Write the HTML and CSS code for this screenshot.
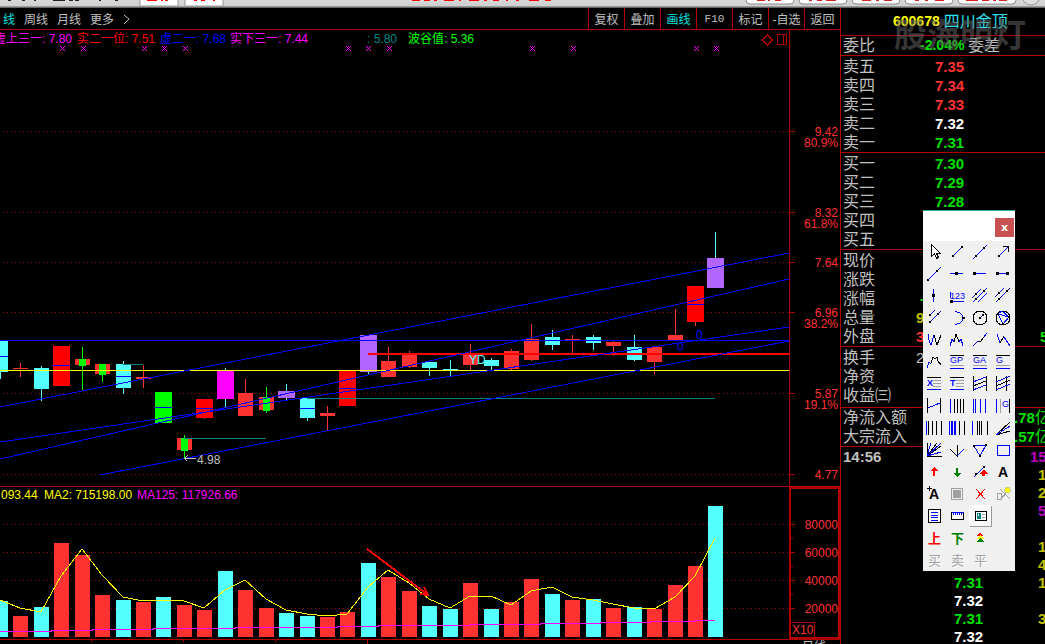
FILE: index.html
```html
<!DOCTYPE html>
<html lang="zh-CN">
<head>
<meta charset="utf-8">
<title>四川金顶 600678</title>
<link rel="stylesheet" href="styles.css">
</head>
<body>
<div class="app">
  <header class="ribbon">
    <svg class="ribbon-left" width="560" height="8" viewBox="0 0 560 8" aria-hidden="true">
      <path d="M8 0.5h3M22 0.5h3M34 0.5h2M53 0.5h12M69 0.5h4M75 0.5h4M99 0.5h2M115 0.5h3" stroke="#222"/>
      <path d="M140 -1h38v7h-38zM185 -1h38v7h-38z" fill="#fff" stroke="#999"/>
      <path d="M147 0.5h10M161 0.5h2M165 0.5h3M194 0.5h3M201 0.5h4M213 0.5h2M412 0.5h8M424 0.5h6M434 0.5h3M444 0.5h10M459 0.5h2M469 0.5h10M484 0.5h3M493 0.5h6M506 0.5h2M516 0.5h3M529 0.5h10M545 0.5h6" stroke="#f00"/>
    </svg>
    <svg class="ribbon-right" width="300" height="8" viewBox="0 0 300 8" aria-hidden="true">
      <g fill="#fff" stroke="#8a8a8a"><rect x="1" y="-10" width="48" height="14" rx="4"/><rect x="54" y="-10" width="48" height="14" rx="4"/><rect x="107" y="-10" width="48" height="14" rx="4"/><rect x="160" y="-10" width="48" height="14" rx="4"/><rect x="213" y="-10" width="58" height="14" rx="4"/></g>
      <circle cx="286" cy="-4" r="9" fill="#ddd" stroke="#999"/>
      <path d="M12 0.5h8M23 0.5h2M30 0.5h6M64 0.5h3M72 0.5h5M81 0.5h10M117 0.5h9M131 0.5h3M139 0.5h8M170 0.5h4M180 0.5h3M190 0.5h9M221 0.5h12M237 0.5h7M248 0.5h3M254 0.5h8" stroke="#d22"/>
    </svg>
  </header>
  <main class="work">
    <section class="left">
      <nav class="toolbar">
        <div class="periods">
          <button class="on">线</button><button>周线</button><button>月线</button><button>更多</button>
          <svg width="8" height="12" viewBox="0 0 8 12" aria-hidden="true"><path d="M1 2l5 4-5 5" fill="none" stroke="#c0c0c0"/></svg>
        </div>
        <div class="tools">
          <button>复权</button><button>叠加</button><button class="on">画线</button><button class="mono">F10</button><button>标记</button><button>-自选</button><button>返回</button>
        </div>
      </nav>
      <div class="pane price">
        <svg class="plot" id="price" viewBox="0 30 789 456" preserveAspectRatio="none"></svg>
        <div class="legend">
          <span class="pink">虚上三一: 7.80</span><span class="red">实二一位: 7.51</span><span class="blue">虚二一: 7.68</span><span class="pink">实下三一: 7.44</span><span class="teal">: 5.80</span><span class="lime">波谷值: 5.36</span>
        </div>
        <svg class="axis" id="priceAxis" viewBox="789 30 51 456"></svg>
      </div>
      <div class="pane volume">
        <svg class="plot" id="volume" viewBox="0 487 789 152" preserveAspectRatio="none"></svg>
        <div class="legend vol"><span class="yellow">093.44</span><span class="yellow">MA2: 715198.00</span><span class="pink">MA125: 117926.66</span></div>
        <svg class="axis" id="volumeAxis" viewBox="789 487 51 152"></svg>
      </div>
      <footer class="foot">
        <svg class="ticks" viewBox="0 0 802 4" preserveAspectRatio="none" aria-hidden="true"><path d="M91.5 0v2M183.500 0v2M275.500 0v2M367.500 0v4" stroke="#b00000"/></svg>
        <span>日线</span>
      </footer>
    </section>
    <aside class="quote">
      <div class="title"><b>600678</b><span>四川金顶</span></div>
      <div class="ratio"><span>委比</span><b>-2.04%</b><span>委差</span></div>
      <div class="watermark" aria-hidden="true">股海明灯</div>
      <div class="group book">
        <div class="row"><span>卖五</span><b class="up">7.35</b></div>
        <div class="row"><span>卖四</span><b class="up">7.34</b></div>
        <div class="row"><span>卖三</span><b class="up">7.33</b></div>
        <div class="row"><span>卖二</span><b class="flat">7.32</b></div>
        <div class="row"><span>卖一</span><b class="down">7.31</b></div>
      </div>
      <div class="group book">
        <div class="row"><span>买一</span><b class="down">7.30</b></div>
        <div class="row"><span>买二</span><b class="down">7.29</b></div>
        <div class="row"><span>买三</span><b class="down">7.28</b></div>
        <div class="row"><span>买四</span></div>
        <div class="row"><span>买五</span></div>
      </div>
      <div class="group">
        <div class="row"><span>现价</span></div>
        <div class="row"><span>涨跌</span></div>
        <div class="row"><span>涨幅</span><b class="down dash">-</b></div>
        <div class="row"><span>总量</span><b class="gold">9</b></div>
        <div class="row"><span>外盘</span><b class="up">3</b><b class="down edge">5</b></div>
      </div>
      <div class="group loose">
        <div class="row"><span>换手</span><b class="plain">2</b></div>
        <div class="row"><span>净资</span></div>
        <div class="row"><span>收益㈢</span></div>
      </div>
      <div class="group tight">
        <div class="row"><span>净流入额</span><i></i><span class="down"><b>.78</b>亿</span></div>
        <div class="row"><span>大宗流入</span><i></i><span class="down"><b>.57</b>亿</span></div>
      </div>
      <div class="trades">
        <div class="trade"><b>14:56</b><b></b><b class="violet">15</b></div>
        <div class="trade one"><b></b><b></b><b class="gold">1</b></div>
        <div class="trade one"><b></b><b></b><b class="gold">2</b></div>
        <div class="trade one"><b></b><b></b><b class="violet">5</b></div>
        <div class="trade one"></div>
        <div class="trade one"><b></b><b></b><b class="gold">1</b></div>
        <div class="trade one"><b></b><b></b><b class="gold">4</b></div>
        <div class="trade one"><b></b><b class="down">7.31</b><b class="gold">1</b></div>
        <div class="trade one"><b></b><b class="flat">7.32</b></div>
        <div class="trade one"><b></b><b class="down">7.31</b><b class="gold">3</b></div>
        <div class="trade one"><b></b><b class="flat">7.32</b></div>
      </div>
    </aside>
  </main>
  <div class="palette" role="dialog" aria-label="画线工具">
    <div class="palette-head"><button class="close" aria-label="关闭">x</button></div>
    <div class="palette-grid" id="palette"></div>
  </div>
</div>
<script src="chart.js"></script>
</body>
</html>
```
FILE: styles.css
```css
* { box-sizing: border-box; }
body {
  margin: 0;
  background: #000;
  color: #c0c0c0;
  font-family: "Liberation Sans", "Noto Sans CJK SC", sans-serif;
  font-size: 12px;
  overflow: hidden;
}
button {
  border: 0;
  padding: 0;
  margin: 0;
  background: none;
  color: inherit;
  font: inherit;
}
svg { display: block; }
.app { position: relative; min-height: 100vh; }
.ribbon {
  display: flex;
  justify-content: space-between;
  height: 8px;
  background: linear-gradient(#d8d8d8, #cfcfcf 6px, #666 7px);
  overflow: hidden;
}
.ribbon svg { flex: none; }
.work { display: grid; grid-template-columns: minmax(0, 1fr) 205px; }
.left { min-width: 0; }

.toolbar {
  display: flex;
  justify-content: space-between;
  height: 22px;
  border-bottom: 1px solid #b00000;
}
.periods { display: flex; align-items: center; gap: 9px; padding-left: 3px; }
.tools { display: flex; }
.tools button { width: 36px; border-left: 1px solid #b00000; white-space: nowrap; }
.toolbar .on { color: #00e0e0; }
.tools .mono { font-family: "Liberation Mono", monospace; font-size: 11px; }

.pane {
  position: relative;
  display: grid;
  grid-template-columns: minmax(0, 1fr) 51px;
  border-bottom: 1px solid #b00000;
}
.price svg { height: 456px; width: 100%; }
.volume svg { height: 152px; width: 100%; }
.plot, .axis, .ticks, .palette-grid svg { shape-rendering: crispEdges; }
.legend {
  position: absolute;
  top: 0;
  left: -6px;
  display: grid;
  grid-template-columns: 83px 83px 70px 137px 41px 80px;
  line-height: 18px;
  white-space: nowrap;
}
.legend.vol { left: 1px; grid-template-columns: 43px 93px 110px; line-height: 16px; }
.pink { color: #f0f; }
.red { color: #f00; }
.blue { color: #00f; }
.teal { color: #008888; }
.lime { color: #0f0; }
.yellow { color: #ff0; }
.foot { display: grid; grid-template-columns: minmax(0, 1fr) 38px; height: 4px; overflow: hidden; line-height: 14px; }
.foot svg { width: 100%; height: 4px; }

.quote {
  position: relative;
  border-left: 1px solid #b00000;
  font-size: 16px;
  line-height: 19px;
  overflow: hidden;
}
.quote b { font-size: 15px; white-space: nowrap; }
.title {
  display: flex;
  gap: 4px;
  height: 28px;
  padding: 4px 0 0 52px;
  border-bottom: 1px solid #b00000;
  color: #30e0f0;
}
.title b, .ratio b { font-size: 14px; }
.title b { color: #ff0; }
.ratio { display: flex; height: 20px; padding-left: 2px; border-bottom: 1px solid #b00000; }
.ratio b { margin-left: 45px; width: 48px; color: #00e000; }
.watermark {
  position: absolute;
  top: 8px;
  left: 53px;
  color: rgba(100, 100, 100, 0.55);
  font-size: 33px;
  font-weight: 700;
  line-height: 40px;
  white-space: nowrap;
}
.group { padding-top: 1px; border-bottom: 1px solid #b00000; }
.loose { padding-bottom: 2px; }
.tight { padding-top: 0; }
.row {
  display: grid;
  grid-template-columns: 73px 98px 60px;
  height: 19px;
  padding-left: 2px;
  white-space: nowrap;
}
.book .row b { padding-left: 19px; }
.row .edge { padding-left: 26px; }
.row .dash { padding-left: 4px; }
.row .plain { font-weight: 400; }
.up { color: #ff3232; }
.down { color: #00e000; }
.flat { color: #fff; }
.gold { color: #c0c000; }
.violet { color: #c000c0; }
.trades { padding-top: 1px; line-height: 18px; }
.trade { display: grid; grid-template-columns: 111px 76px 20px; height: 18px; padding-left: 2px; }
.one b:nth-child(3) { padding-left: 8px; }

.palette {
  position: absolute;
  top: 210px;
  right: 30px;
  width: 92px;
  background: #f0f0f0;
  border-top: 1px solid #20b0a0;
}
.palette-head { display: flex; justify-content: flex-end; height: 30px; padding: 7px 1px 0 0; background: #fff; }
.close {
  width: 19px;
  height: 19px;
  background: #c75050;
  color: #fff;
  font: bold 11px/16px "DejaVu Sans", sans-serif;
}
.palette-grid { display: grid; grid-template-columns: repeat(4, 23px); grid-auto-rows: 22px; }
.palette-grid svg { width: 23px; height: 22px; overflow: visible; }
.palette-grid .pressed { background: #f8f8f8; box-shadow: inset 1px 1px #fff, inset -1px -1px #999; }
.palette-grid button:focus-visible { outline: 1px dotted #000; }
svg text { font-family: "Liberation Sans", "Noto Sans CJK SC", sans-serif; font-size: 12px; }
.palette-grid .small { font-size: 9px; }
.palette-grid .bold { font-size: 14px; font-weight: 700; }
.palette-grid .word { font-size: 13px; }
.palette-grid .strong { font-weight: 700; }
```
FILE: chart.js
```js
const CYAN = '#54ffff', RED = '#ff3232', HOT = '#ff0000', GREEN = '#00ff00', PURPLE = '#b266ff', PINK = '#ff00ff';
const rect = (x, y, w, h, c) => `<rect x="${x}" y="${y}" width="${w}" height="${h}" fill="${c}"/>`;
const line = (x1, y1, x2, y2, c, w = 1, extra = '') =>
  `<line x1="${x1}" y1="${y1}" x2="${x2}" y2="${y2}" stroke="${c}" stroke-width="${w}" ${extra}/>`;
const grid = y => line(3, y + .5, 789, y + .5, '#a00000', 1, 'stroke-dasharray="1 3"');

/* x, width, top, bottom, wick x, wick top, wick bottom, colour, wick colour, mid mark */
const candles = [
  [0,8,341,372,0,341,379,CYAN,CYAN,356],[13,15,368,369,20,363,377,RED,RED],[34,15,368,389,41,366,401,CYAN,CYAN],
  [53,17,346,386,61,346,386,HOT,HOT,365],[75,15,359,365,82,347,391,RED,GREEN],[95,15,364,374,102,364,382,RED,GREEN],
  [116,15,364,388,123,361,394,CYAN,CYAN,376],[136,15,377,379,143,365,388,RED,RED],[155,17,392,423,163,392,423,GREEN,GREEN,407],
  [177,15,438,450,184,435,459,RED,GREEN],[196,17,399,418,204,399,419,HOT,RED,408],[217,17,371,399,225,368,407,PINK,CYAN],
  [238,15,393,416,245,379,416,RED,RED],[259,15,397,410,266,387,413,RED,GREEN],[278,17,391,398,286,384,400,PURPLE,CYAN],
  [300,15,398,418,307,398,421,CYAN,CYAN,408],[320,15,413,416,327,406,430,RED,RED],[339,17,371,406,347,371,406,HOT,HOT,388],
  [360,17,335,372,368,335,375,PURPLE,CYAN],[381,15,361,377,388,347,377,RED,RED],[402,15,355,367,409,351,368,RED,RED],
  [422,15,362,368,429,362,376,CYAN,CYAN],[443,15,369,370,450,360,376,CYAN,CYAN],[463,15,355,365,470,344,370,RED,RED],
  [484,15,360,366,491,358,370,CYAN,CYAN],[504,15,351,369,511,349,370,RED,RED],[524,15,339,360,531,324,361,RED,RED],
  [545,15,337,345,552,330,350,CYAN,CYAN],[565,15,339,340,572,335,353,RED,RED],[586,15,337,343,593,335,350,CYAN,CYAN],
  [606,15,342,346,613,341,356,RED,RED],[627,15,347,360,634,335,361,CYAN,CYAN],[647,15,347,362,654,347,374,RED,RED],
  [668,15,335,340,675,309,340,RED,RED],[687,17,286,322,695,286,326,HOT,RED,304],[707,17,258,288,715,232,288,PURPLE,CYAN]
];
let p = [131, 212, 262, 312, 393, 474].map(grid).join('');
for (const [x, w, t, b, wx, wt, wb, c, wc, mid] of candles) {
  p += rect(wx, wt, 1, wb - wt, wc) + rect(x, t, w, b - t, c);
  if (c === RED && wc === GREEN) p += rect(x + 4, t, 7, b - t + 1, GREEN);
  if (mid) p += rect(x, mid, w, 1, '#0000ff');
}
p += rect(123, 364, 20, 1, '#008080') + rect(184, 438, 82, 1, '#008080') + rect(307, 398, 408, 1, '#008080');
p += rect(0, 340, 789, 1, '#0000ff') + rect(368, 353, 421, 2, '#ff0000') + rect(0, 370, 789, 1, '#ffff00');
for (const [a, b, c] of [[0, 407, 253], [0, 442, 327], [0, 459, 279], [100, 475, 341]])
  p += line(a, b, 789, c, '#0000ff');
p += '<path d="M196 458.500h-12M187.500 455.500l-3 3 3 3" fill="none" stroke="#c0c0c0"/><text x="197" y="464" fill="#c0c0c0">4.98</text>';
p += '<text x="469" y="364" fill="#54ffff">YD</text><text x="677" y="351" fill="#0000ff">0</text><text x="696" y="339" fill="#0000ff">0</text>';
for (const x of [62, 83, 144, 164, 185, 348, 368, 389, 532, 573, 696, 716])
  p += `<path d="M${x - 2} 46l5 5M${x + 3} 46l-5 5" stroke="#ff00ff"/>`;
p += '<path d="M767.500 35l5 5-5 5-5-5zM777.500 34.500h9v10h-9zM783.500 34v11" fill="none" stroke="#b00000"/>';
document.getElementById('price').innerHTML = p;

const label = (y, t) => `<text x="838" y="${y + 5}" text-anchor="end" fill="#ff3232">${t}</text>`;
let a = rect(789, 30, 1, 456, '#b00000');
for (const [y, t, s] of [[131,'9.42','80.9%'],[212,'8.32','61.8%'],[262,'7.64'],[312,'6.96','38.2%'],[393,'5.87','19.1%'],[474,'4.77']])
  a += rect(790, y, 5, 1, '#b00000') + label(y, t) + (s ? label(y + 11, s) : '');
document.getElementById('priceAxis').innerHTML = a;

const tops = [601,616,607,543,555,595,600,602,597,605,610,571,590,608,613,616,617,612,563,577,591,606,609,583,609,602,579,594,600,599,608,607,609,585,566,506];
const cyanBars = new Set([0,2,6,8,11,14,15,18,21,22,24,27,29,31,35]);
const average = [600,608,612,576,549,575,597,601,600,601,608,590,580,599,610,614,616,614,587,570,583,599,608,596,596,605,591,587,597,600,604,608,609,597,576,538];
let v = [524, 552, 580, 608].map(grid).join('');
tops.forEach((t, i) => {
  const x = i ? candles[i][4] - 7 : 0;
  v += rect(x, t, i ? 15 : 8, 637 - t, cyanBars.has(i) ? CYAN : RED);
});
v += `<polyline points="${average.map((y, i) => candles[i][4] + ',' + y).join(' ')}" fill="none" stroke="#ffff00"/>`;
v += '<path d="M0 631.500H51V630.500H92V629.500H153V628.500H235V627.500H337V626.500H378V625.500H470V624.500H540V623.500H600V622.500H650V621.500H695V620.500H715" fill="none" stroke="#ff00ff"/>';
v += '<path d="M367 549L428 595M424 587l4 8-8-1" fill="none" stroke="#ff0000" stroke-width="2"/>';
document.getElementById('volume').innerHTML = v;

let va = '<path d="M790 487V638H839V487.500H790" fill="none" stroke="#b00000" stroke-width="2"/>';
for (const y of [524, 552, 580, 608]) va += rect(790, y, 5, 1, '#b00000') + rect(790, y + 14, 3, 1, '#b00000');
va += [['80000', 524], ['60000', 552], ['40000', 580], ['20000', 608]].map(([t, y]) => label(y, t)).join('');
va += '<rect x="790.500" y="622.500" width="24" height="15" fill="#000" stroke="#b00000"/><text x="792" y="634" fill="#ff3232">X10</text>';
document.getElementById('volumeAxis').innerHTML = va;

const K = '#000', B = '#0000ff', G = '#a0a0a0';
const s = (d, c = B, w = 1) => `<path d="${d}" fill="none" stroke="${c}" stroke-width="${w}"/>`;
const dots = (...q) => q.map(([x, y]) => rect(x - 1, y - 1, 2, 2, K)).join('');
const gann = t => s('M4 4.500h14', K) + `<text class="small" x="4" y="12" fill="#00f">${t}</text>` + s('M4 14.500h14', G) + s('M4 17.500h14', B, 1);
const bands = t => s('M4 4.500h14', K) + `<text class="small strong" x="4" y="13" fill="#00f">${t}</text>` + s('M10 7.500h8M10 10.500h8M10 13.500h8', G) + s('M4 16.500h14');
const v1 = (xs, c) => s(xs.map(x => `M${x}.500 4v14`).join(''), c);
const word = (t, c) => `<text class="word" x="5" y="16" fill="${c}">${t}</text>`;
const ghost = t => `<text class="word" x="6" y="17" fill="#fff">${t}</text>` + word(t, G);
const icons = [
  ['选择', '<path d="M8.500 3.500v12l3-3 2 5 2-1-2-4h4z" fill="#fff" stroke="#000"/>'],
  ['线段', s('M7 15L16 6') + dots([7,15],[16,6])],
  ['直线', s('M4 18L18 4') + dots([7,15],[15,7])],
  ['箭头', s('M7 15L16 6') + s('M11 5.500h5.500V11', K) + dots([7,15])],
  ['射线', s('M5 17L18 4') + dots([5,17],[14,8])],
  ['水平线', s('M4 10.500h13') + rect(9,9,3,3,K)],
  ['水平射线', s('M4 10.500h13') + rect(4,9,3,3,K)],
  ['水平线段', s('M4 10.500h13') + rect(4,9,3,3,K) + rect(14,9,3,3,K)],
  ['垂直线', s('M10.500 4v13') + rect(9,9,3,3,K)],
  ['数字线', '<text class="small" x="4" y="14" fill="#00f">123</text>' + s('M4.500 7v6M5 16.500h13') + rect(4,15,3,3,K)],
  ['平行线', s('M3 13L12 4M4 17L18 3M9 17L18 8') + dots([7,9],[7,14],[15,6])],
  ['平行线段', s('M3 12L12 3M4 17L18 3') + dots([7,8],[7,14],[15,6])],
  ['通道线', s('M6 9L12 3M6 16L18 4') + dots([7,8],[7,15],[15,7])],
  ['圆弧', s('M9 5c4-1 8 3 8 6s-3 7-8 6') + rect(16,10,3,2,K)],
  ['圆', '<circle cx="11" cy="11" r="7" fill="none" stroke="#000"/>' + s('M11 11l4-4') + dots([11,11],[14,8])],
  ['外接圆', '<circle cx="11" cy="11" r="7" fill="none" stroke="#000"/>' + s('M6 7l11 3-6 7zM6 7l4-3 7 6') + dots([6,7],[17,10],[11,17])],
  ['波浪线', s('M5 5v4l3 7 3-10') + s('M11 6l3 10 4-10', K)],
  ['多浪', s('M4 17l2-7 2 3') + s('M8 13l2-8 3 8', K) + s('M13 13l2-3 2 7')],
  ['上升浪', s('M4 17l5-5') + s('M9 12h3l3-4', K) + s('M15 8l3-4')],
  ['下跌浪', s('M5 5l3 9') + s('M8 14l4-7', K) + s('M12 8l6 9')],
  ['八浪', s('M4 17l2-6 2 2') + s('M8 12l2-6 2 2 2-2 1 4 3 4', K)],
  ['黄金价位', gann('GP')], ['黄金目标', gann('GA')], ['黄金分割', gann('G')],
  ['百分比', bands('X')], ['波段线', bands('T')],
  ['回归带', s('M4.500 3v15M17.500 3v15', K) + s('M4 9l13-5M4 17l13-5') + s('M4 13l13-5', K)],
  ['回归通道', s('M4.500 3v15M14.500 3v15', K) + s('M4 9l14-6M4 17l14-6') + s('M4 13l14-6', K)],
  ['线性回归', s('M4.500 3v15M17.500 3v15', K) + s('M5 13l12-5')],
  ['周期线', v1([4], B) + v1([8,11,14,17], K)],
  ['等分线', v1([4,6,11,16], B)],
  ['黄金周期', v1([4], B) + v1([8], G) + v1([17], K) + '<text class="small" x="10" y="12" fill="#00f">G</text>'],
  ['斐波周期', v1([3], B) + v1([5,9,13,18], K)],
  ['时间窗', v1([3,5,6,8,9], B) + v1([13,18], K)],
  ['螺旋周期', v1([3], B) + v1([8,10,12,18], K)],
  ['阻速线', s('M4 18L18 5M4 18L18 14', K) + s('M4 18L18 9')],
  ['甘氏线', s('M4.500 4v13.500h14M4 17L14 4M4 17L18 7', K) + s('M4 17L8 4M4 17L18 4M4 17l14-4')],
  ['叉线', s('M11 6v11l-7-7', K) + s('M11 17l7-7')],
  ['三角形', s('M5 7l12-1-6 11z') + dots([5,7],[17,6],[11,17])],
  ['矩形', s('M5.500 6.500h12v10h-12z')],
  ['上箭头', '<path d="M11 6l-4 4h3v5h2v-5h3z" fill="#f00"/>'],
  ['下箭头', '<path d="M11 16l-4-4h3V7h2v5h3z" fill="#008000"/>'],
  ['趋势标记', s('M5 16L16 5') + dots([7,13],[15,6]) + '<path d="M15 8l-5 5h3v2h3v-2h3z" fill="#f00"/>'],
  ['文字', '<text class="bold" x="6" y="16">A</text>'],
  ['标注', '<text class="bold" x="6" y="16">A</text>' + s('M4 5.500h5M6.500 3v5', K)],
  ['全选', '<rect x="5.500" y="5.500" width="11" height="11" fill="none" stroke="#a0a0a0"/>' + rect(7,7,8,8,G)],
  ['删除', s('M7 6l9 10M16 6l-9 10', '#f00')],
  ['隐藏', s('M5.500 10.500h4v6h-4zM8 6l10 10M9 16l6-7', G) + '<circle cx="15.500" cy="7" r="3" fill="#ff0" stroke="#a0a0a0" stroke-width=".5"/>'],
  ['列表', '<rect x="5.500" y="4.500" width="12" height="13" fill="#fff" stroke="#000"/>' + s('M8 7.500h7M8 10.500h7M8 12.500h7M8 15.500h7')],
  ['标尺', '<rect x="5.500" y="7.500" width="12" height="7" fill="#fff" stroke="#000"/>' + s('M6 7.500h12M7.500 8v2M9.500 8v2M11.500 8v2M13.500 8v2M15.500 8v2')],
  ['属性', '<rect x="6.500" y="6.500" width="11" height="9" fill="#fff" stroke="#000"/>' + rect(8,8,4,6,'#008080') + rect(9,9,1,2,'#fff') + s('M13 9.500h3M13 12.500h3', G), 'pressed'],
  null,
  ['上', word('上', '#f00').replace('"word"', '"word strong"')], ['下', word('下', '#008000').replace('"word"', '"word strong"')],
  ['涨跌标记', '<path d="M11 5l-3 4h6z" fill="#f00"/><path d="M11 8l-4 4h8z" fill="#ff0"/><path d="M11 11l-4 4h8z" fill="#008000"/>'],
  null,
  ['买', ghost('买')], ['卖', ghost('卖')], ['平', ghost('平')]
];
document.getElementById('palette').innerHTML = icons.map(i => i
  ? `<button class="${i[2] || ''}" aria-label="${i[0]}"><svg viewBox="0 0 23 22">${i[1]}</svg></button>` : '<span></span>').join('');
```
